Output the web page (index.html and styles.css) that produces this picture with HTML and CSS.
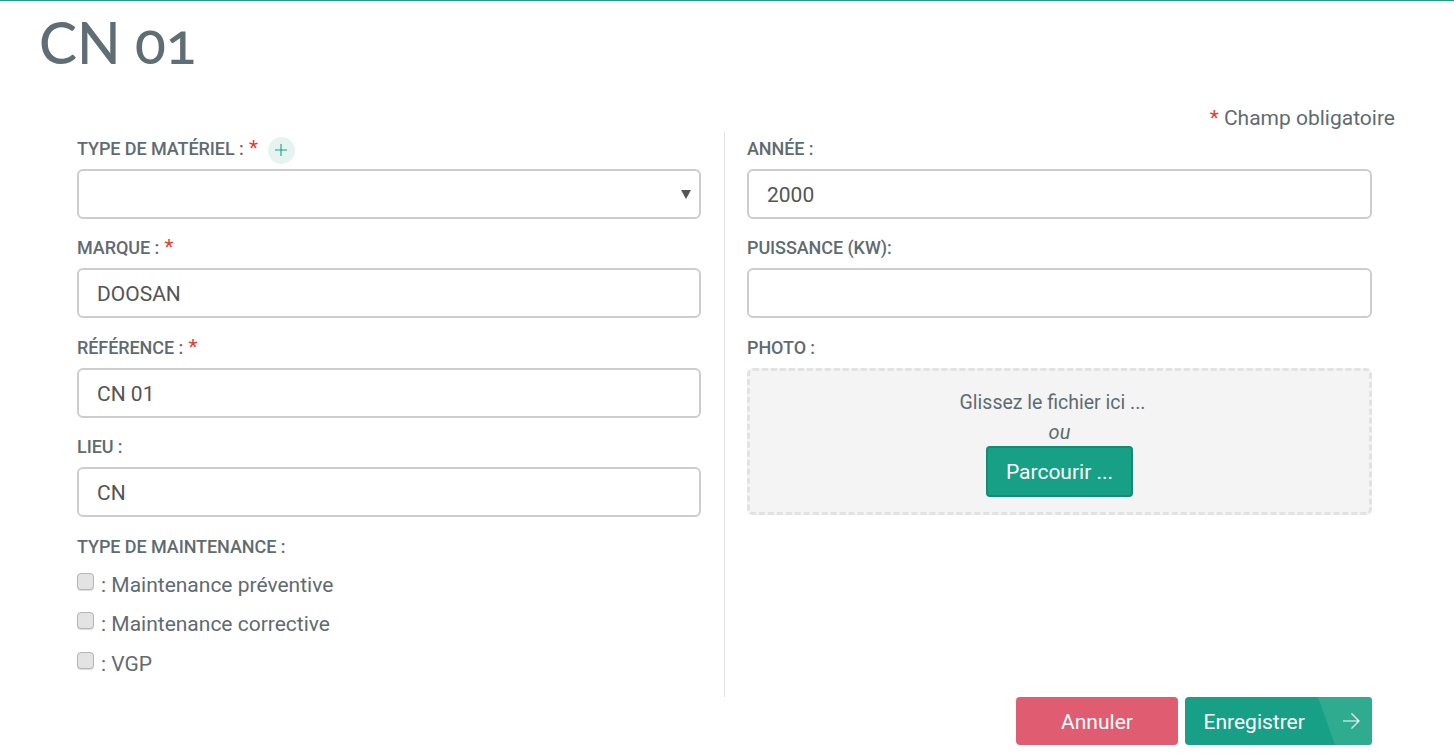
FILE: index.html
```html
<!DOCTYPE html>
<html lang="fr">
<head>
<meta charset="utf-8">
<title>CN 01</title>
<link rel="stylesheet" href="styles.css">
</head>
<body>
<header class="head"><h1 class="title">CN 01</h1></header>
<main class="main">
  <p class="required-note"><span class="star">*</span> Champ obligatoire</p>
  <form class="form">
    <div class="columns">
      <section class="col col-left">
        <div class="field">
          <label class="label">Type de matériel : <span class="star">*</span><span class="add"><svg viewBox="0 0 14 14" width="14" height="14"><path d="M7 1v12M1 7h12" stroke="#17a085" stroke-width="1.1" fill="none"/></svg></span></label>
          <div class="control select"><span class="caret"></span></div>
        </div>
        <div class="field">
          <label class="label">Marque : <span class="star">*</span></label>
          <div class="control">DOOSAN</div>
        </div>
        <div class="field">
          <label class="label">Référence : <span class="star">*</span></label>
          <div class="control">CN 01</div>
        </div>
        <div class="field">
          <label class="label">Lieu :</label>
          <div class="control">CN</div>
        </div>
        <div class="checks">
          <label class="label">Type de maintenance :</label>
          <div class="check"><span class="box"></span><span>: Maintenance préventive</span></div>
          <div class="check"><span class="box"></span><span>: Maintenance corrective</span></div>
          <div class="check"><span class="box"></span><span>: VGP</span></div>
        </div>
      </section>
      <section class="col col-right">
        <div class="field">
          <label class="label">Année :</label>
          <div class="control">2000</div>
        </div>
        <div class="field">
          <label class="label">Puissance (kW):</label>
          <div class="control"></div>
        </div>
        <div class="field">
          <label class="label">Photo :</label>
          <div class="drop">
            <div class="drop-text">Glissez le fichier ici ...</div>
            <div class="drop-or">ou</div>
            <span class="browse">Parcourir ...</span>
          </div>
        </div>
      </section>
    </div>
    <div class="actions">
      <span class="btn btn-cancel">Annuler</span>
      <span class="btn btn-save">Enregistrer<span class="arrow"><svg viewBox="0 0 18 18" width="18" height="18"><path d="M1 9h16M9.500 1.500L17 9l-7.500 7.500" stroke="#fff" stroke-width="1.200" fill="none"/></svg></span></span>
    </div>
  </form>
</main>
</body>
</html>
```
FILE: styles.css
```css
* { box-sizing: border-box; }
html, body { height: 100%; }
body {
  margin: 0;
  border-top: 1px solid #17a085;
  font-family: Roboto, "Liberation Sans", sans-serif;
  font-size: 21px;
  color: #5f6b72;
  background: #fff;
  overflow: hidden;
}
.head { padding: 12px 39px 0; height: 99px; }
.title {
  margin: 0;
  font-family: Lato, "Noto Sans", sans-serif;
  font-variant-numeric: oldstyle-nums;
  font-weight: 500;
  font-size: 57px;
  line-height: 58px;
  color: #5f6d75;
}
.main { padding: 0 60px 0 77px; }
.required-note { margin: 5px -1px 0 0; height: 27px; line-height: 26px; text-align: right; }
.star { color: #f0392b; }
.columns { display: grid; grid-template-columns: 648px 648px; }
.col { height: 565px; padding-top: 6.750px; }
.col-left { padding-right: 23px; border-right: 1px solid #e2e2e2; }
.col-right { padding-left: 22px; width: 648px; }
.field { height: 99.500px; }
.label {
  display: block;
  height: 30px;
  line-height: 20.750px;
  font-size: 18px;
  font-weight: 500;
  text-transform: uppercase;
  white-space: nowrap;
  letter-spacing: -0.08px;
}
.label .star { font-size: 21px; font-weight: 400; line-height: 0; margin-left: 1px; }
.add {
  display: inline-flex;
  align-items: center;
  justify-content: center;
  width: 27px;
  height: 27px;
  margin: -4px 0 -4px 10px;
  border-radius: 50%;
  background: #e6f4f1;
  vertical-align: middle;
}
.control {
  position: relative;
  width: 624px;
  height: 50px;
  padding: 0 18px;
  border: 2px solid #cdcdcd;
  border-radius: 6px;
  line-height: 49.500px;
  color: #555;
}
.col-right .control { width: 625px; }
.caret {
  position: absolute;
  right: 8px;
  top: 19px;
  border-left: 5px solid transparent;
  border-right: 5px solid transparent;
  border-top: 9px solid #555;
}
.checks .label { height: 20px; margin-bottom: 8.250px; }
.check { display: flex; align-items: center; gap: 7px; height: 39.500px; }
.box {
  width: 17px;
  height: 17px;
  margin-top: -7px;
  border: 1px solid #b5b5b5;
  border-radius: 4px;
  background: #e3e3e3;
  box-shadow: 0 1px 1px rgba(0,0,0,.15);
}
.drop {
  width: 625px;
  height: 147px;
  border: 3px dashed #e2e2e2;
  border-radius: 6px;
  background: #f4f4f4;
  text-align: center;
  padding-top: 20px;
}
.drop-text { font-size: 19.500px; line-height: 24px; padding-right: 14px; }
.drop-or { font-size: 20px; font-style: italic; line-height: 24px; margin-top: 5px; margin-bottom: 2px; }
.browse {
  display: inline-block;
  width: 147px;
  height: 51px;
  border: 2px solid #128c73;
  border-radius: 4px;
  background: #17a085;
  color: #fff;
  line-height: 48px;
}
.actions { display: flex; justify-content: flex-end; gap: 7px; width: 1295px; }
.btn {
  position: relative;
  height: 48px;
  border-radius: 4px;
  color: #fff;
  line-height: 50px;
  overflow: hidden;
}
.btn-cancel { width: 162px; background: #e05c70; text-align: center; }
.btn-save { width: 187px; background: #17a085; padding-left: 18.500px; }
.arrow {
  position: absolute;
  right: 0;
  top: 0;
  width: 54px;
  height: 48px;
  background: #2fab90;
  clip-path: polygon(0 0, 100% 0, 100% 100%, 17px 100%);
  display: flex;
  align-items: center;
  justify-content: flex-end;
  padding-right: 12px;
}
```
